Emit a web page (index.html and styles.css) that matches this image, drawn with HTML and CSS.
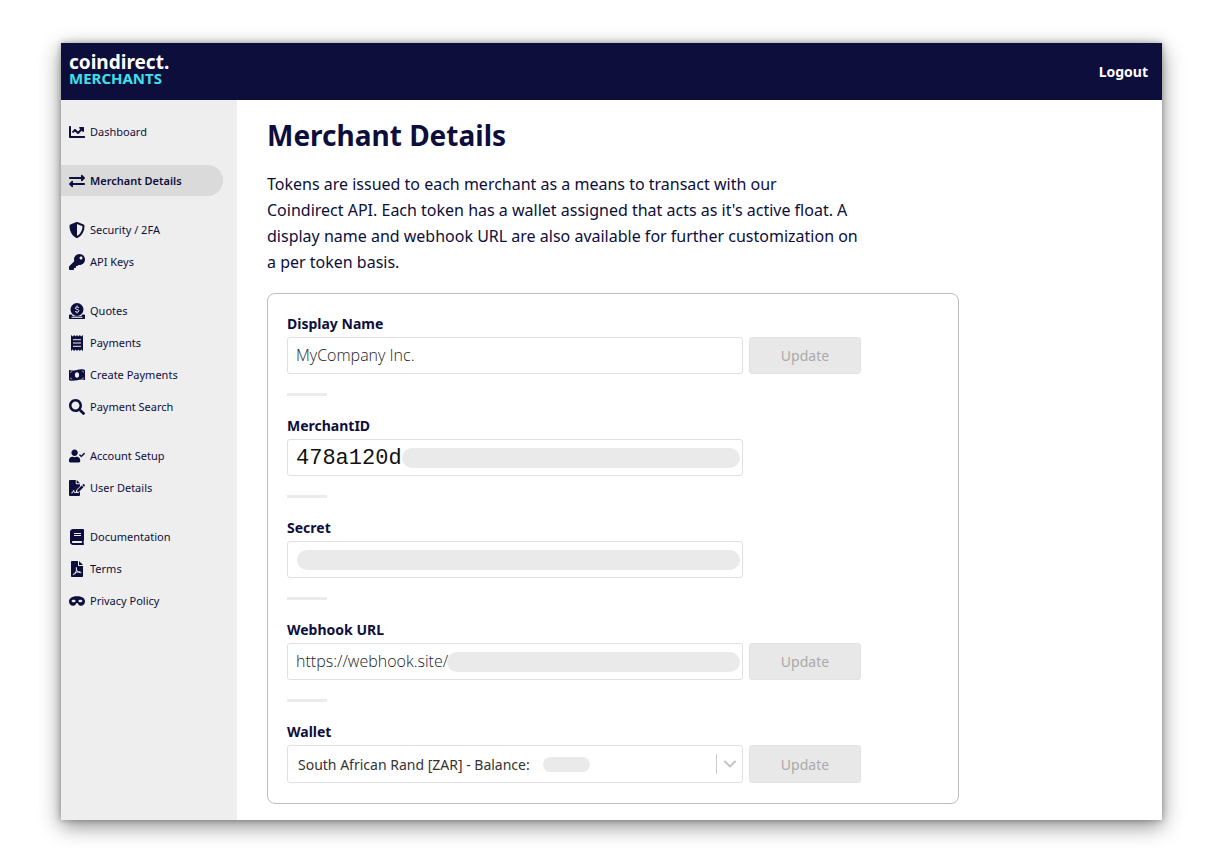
FILE: index.html
```html
<!DOCTYPE html>
<html lang="en">
<head>
<meta charset="utf-8">
<meta name="viewport" content="width=device-width, initial-scale=1">
<title>Merchant Details</title>
<link rel="stylesheet" href="styles.css">
</head>
<body>
<div class="window">
  <header class="topbar">
    <a class="brand" href="#"><span class="brand-name">coindirect.</span><span class="brand-sub">MERCHANTS</span></a>
    <a class="logout" href="#">Logout</a>
  </header>
  <div class="layout">
    <nav class="sidebar" aria-label="Main">
      <div class="nav-group">
        <a class="nav-item" href="#"><svg class="icon" viewBox="0 0 512 512"><path d="M496 384H64V80c0-8.840-7.160-16-16-16H16C7.160 64 0 71.160 0 80v336c0 17.670 14.330 32 32 32h464c8.840 0 16-7.160 16-16v-32c0-8.840-7.160-16-16-16zM464 96H345.940c-21.380 0-32.090 25.850-16.970 40.970l32.400 32.400L288 242.750l-73.370-73.370c-12.500-12.500-32.760-12.500-45.250 0l-68.690 68.690c-6.250 6.250-6.250 16.380 0 22.630l22.620 22.620c6.250 6.250 16.380 6.250 22.630 0L192 237.250l73.370 73.370c12.500 12.500 32.760 12.500 45.250 0l96-96 32.400 32.400c15.120 15.120 40.970 4.410 40.970-16.970V112c.010-8.840-7.150-16-15.990-16z"/></svg>Dashboard</a>
      </div>
      <div class="nav-group">
        <a class="nav-item active" href="#" aria-current="page"><svg class="icon" viewBox="0 0 512 512"><path d="M0 168v-16c0-13.255 10.745-24 24-24h360V80c0-21.367 25.899-32.042 40.971-16.971l80 80c9.372 9.373 9.372 24.569 0 33.941l-80 80C409.956 271.982 384 261.456 384 240v-48H24c-13.255 0-24-10.745-24-24zm488 152H128v-48c0-21.314-25.862-32.080-40.971-16.971l-80 80c-9.372 9.373-9.372 24.569 0 33.941l80 80C102.057 463.997 128 453.437 128 432v-48h360c13.255 0 24-10.745 24-24v-16c0-13.255-10.745-24-24-24z"/></svg>Merchant Details</a>
      </div>
      <div class="nav-group">
        <a class="nav-item" href="#"><svg class="icon" viewBox="0 0 512 512"><path d="M466.500 83.700l-192-80a48.150 48.150 0 0 0-36.900 0l-192 80C27.700 91.100 16 108.600 16 128c0 198.500 114.500 335.700 221.500 380.300 11.800 4.900 25.100 4.900 36.900 0C360.100 472.600 496 349.300 496 128c0-19.400-11.700-36.900-29.500-44.300zM256.100 446.300l-.1-381 175.900 73.300c-3.300 151.400-82.100 261.100-175.800 307.700z"/></svg>Security / 2FA</a>
        <a class="nav-item" href="#"><svg class="icon" viewBox="0 0 512 512"><path d="M512 176C512 273.200 433.200 352 336 352c-11.200 0-22.200-1-32.800-3l-24 27a24 24 0 0 1-18 8H224v40c0 13.300-10.700 24-24 24h-40v40c0 13.300-10.700 24-24 24H24c-13.300 0-24-10.700-24-24v-78c0-6.400 2.500-12.500 7-17l161.800-161.800C163.100 213.800 160 195.300 160 176 160 78.800 238.800 0 336 0c97.500 0 176 78.500 176 176zM336 128c0 26.500 21.500 48 48 48s48-21.500 48-48-21.500-48-48-48-48 21.500-48 48z"/></svg>API Keys</a>
      </div>
      <div class="nav-group">
        <a class="nav-item" href="#"><svg class="icon" viewBox="0 0 16 16"><circle cx="8" cy="6.500" r="6.500"/><path d="M0.800 11.500H2.500L4 13.200H12L13.500 11.500H15.200Q16 11.500 16 12.300V15.200Q16 16 15.200 16H.8Q0 16 0 15.200V12.300Q0 11.500.8 11.500Z"/><path class="cut" d="M2.500 14.300H13.500M10 4.700C9.400 3.900 6.300 3.600 6.300 5.200 6.300 6.800 9.900 6 9.900 7.800 9.900 9.500 6.700 9.300 6 8.300M8 2.600V3.800M8 9.200V10.400"/></svg>Quotes</a>
        <a class="nav-item" href="#"><svg class="icon" viewBox="0 0 16 16"><path d="M2 0 3.800 1.400 5.200 0 6.600 1.400 8 0 9.400 1.400 10.800 0 12.200 1.400 14 0V16L12.200 14.600 10.800 16 9.400 14.600 8 16 6.600 14.600 5.200 16 3.800 14.600 2 16Z"/><path class="cut" d="M4 4.700H12M4 8H12M4 11.300H12"/></svg>Payments</a>
        <a class="nav-item" href="#"><svg class="icon" viewBox="0 0 16 16"><path d="M0 3.600Q0 2.900.7 3.100C5.800 5 9.500.9 15.300 2.700Q16 2.900 16 3.600V12.500Q16 13.200 15.300 13C10.200 11.200 6.500 15.100.7 13.400Q0 13.200 0 12.500Z"/><ellipse class="cut-fill" cx="8" cy="8" rx="2.100" ry="2.800"/><path class="cut thin" d="M1 5.400Q2.600 5.400 2.800 4.200M1 11Q2.700 11.100 2.900 12.600M15 5.100Q13.400 5 13.200 3.500M15 10.900Q13.400 10.900 13.100 12"/></svg>Create Payments</a>
        <a class="nav-item" href="#"><svg class="icon" viewBox="0 0 512 512"><path d="M505 442.700L405.300 343c-4.500-4.500-10.600-7-17-7H372c27.600-35.300 44-79.700 44-128C416 93.100 322.900 0 208 0S0 93.100 0 208s93.100 208 208 208c48.300 0 92.700-16.400 128-44v16.300c0 6.400 2.500 12.500 7 17l99.700 99.700c9.400 9.400 24.600 9.400 33.900 0l28.300-28.300c9.400-9.400 9.400-24.600.1-34zM208 336c-70.700 0-128-57.200-128-128 0-70.700 57.200-128 128-128 70.700 0 128 57.200 128 128 0 70.700-57.200 128-128 128z"/></svg>Payment Search</a>
      </div>
      <div class="nav-group">
        <a class="nav-item" href="#"><svg class="icon" viewBox="0 0 640 512"><path d="M224 256c70.700 0 128-57.300 128-128S294.700 0 224 0 96 57.300 96 128s57.300 128 128 128zm89.600 32h-16.700c-22.200 10.200-46.900 16-72.900 16s-50.600-5.800-72.900-16h-16.700C60.200 288 0 348.200 0 422.400V464c0 26.500 21.500 48 48 48h352c26.500 0 48-21.500 48-48v-41.600c0-74.200-60.200-134.400-134.400-134.400z"/><path d="M636 159 608 130Q602 126 596 130L491 235 445 189Q439 185 433 189L404 217Q400 223 404 229L484 310Q491 314 497 310L636 171Q640 165 636 159Z"/></svg>Account Setup</a>
        <a class="nav-item" href="#"><svg class="icon" viewBox="0 0 16 16"><path d="M0 1Q0 0 1 0H6.800V3.500Q6.800 4.200 7.500 4.200H11V6.300L7 10.200V12.300L5.800 12 5 10.300Q4.500 9.500 4 10.300L3.200 12.400H2V13.200H3.700L4.500 11.300 5.300 13H9.300L11 11.500V15Q11 16 10 16H1Q0 16 0 15ZM7.700 0 11 3.300H7.700Z"/><path d="M12.700 5.500 14.500 7.300 10.100 11.800H8.200V10ZM13.300 4.900 14 4.200Q14.500 3.800 15 4.200L15.800 5Q16.200 5.500 15.800 6L15.100 6.700Z"/></svg>User Details</a>
      </div>
      <div class="nav-group">
        <a class="nav-item" href="#"><svg class="icon" viewBox="-32 0 512 512"><path d="M448 360V24c0-13.300-10.700-24-24-24H96C43 0 0 43 0 96v320c0 53 43 96 96 96h328c13.300 0 24-10.700 24-24v-16c0-7.500-3.500-14.300-8.900-18.700-4.200-15.400-4.200-59.300 0-74.700 5.400-4.300 8.900-11.100 8.900-18.600zM128 134c0-3.300 2.700-6 6-6h212c3.300 0 6 2.700 6 6v20c0 3.300-2.700 6-6 6H134c-3.300 0-6-2.700-6-6v-20zm0 64c0-3.300 2.700-6 6-6h212c3.300 0 6 2.700 6 6v20c0 3.300-2.700 6-6 6H134c-3.300 0-6-2.700-6-6v-20zm253.400 250H96c-17.700 0-32-14.300-32-32 0-17.600 14.400-32 32-32h285.400c-1.900 17.100-1.900 46.900 0 64z"/></svg>Documentation</a>
        <a class="nav-item" href="#"><svg class="icon" viewBox="0 0 16 16"><path d="M2 .8Q2 0 2.800 0H9V4.300Q9 5 9.700 5H14V15.200Q14 16 13.200 16H2.800Q2 16 2 15.200ZM10 0 14 4H10Z"/><path class="cut" d="M7.300 6.500C6.800 9.500 8.500 11 11.500 11.800 12.800 11.300 11 10 7.500 11.300 4.500 12.400 3.800 13.800 4.700 13.700 6 13.500 8.300 9 7.300 6.500Z"/></svg>Terms</a>
        <a class="nav-item" href="#"><svg class="icon" viewBox="0 0 640 512"><path d="M320.700 64c-442.600 0-357.600 384-158.500 384 39.900 0 77.500-20.700 101.400-55.900l25.700-37.800c15.700-23 47-23 62.700 0l25.700 37.800C401.700 427.300 439.200 448 479.100 448c189.900 0 290.700-384-158.400-384zM184 308.400c-41.100 0-67.800-25.700-80.100-41.100-5.200-6.500-5.200-16.100 0-22.600 12.300-15.400 39-41.100 80.100-41.100s67.800 25.700 80.100 41.100c5.200 6.500 5.200 16.100 0 22.600-12.300 15.400-39 41.100-80.100 41.100zm272 0c-41.100 0-67.800-25.700-80.100-41.100-5.200-6.500-5.200-16.100 0-22.600 12.300-15.400 39-41.100 80.100-41.100s67.800 25.700 80.100 41.100c5.200 6.500 5.200 16.100 0 22.600-12.300 15.400-39 41.100-80.100 41.100z"/></svg>Privacy Policy</a>
      </div>
    </nav>
    <main class="content">
      <h1 class="title">Merchant Details</h1>
      <p class="intro">Tokens are issued to each merchant as a means to transact with our<br>Coindirect API. Each token has a wallet assigned that acts as it's active float. A<br>display name and webhook URL are also available for further customization on<br>a per token basis.</p>
      <form class="card">
        <div class="field">
          <label class="label" for="display-name">Display Name</label>
          <div class="row">
            <div class="control"><input class="input" id="display-name" type="text" value="MyCompany Inc."></div>
            <button class="update" type="button" disabled>Update</button>
          </div>
        </div>
        <hr class="divider">
        <div class="field">
          <label class="label" for="merchant-id">MerchantID</label>
          <div class="row">
            <div class="control"><input class="input mono" id="merchant-id" type="text" value="478a120d" readonly><span class="mask mask-id"></span></div>
          </div>
        </div>
        <hr class="divider">
        <div class="field">
          <label class="label" for="secret">Secret</label>
          <div class="row">
            <div class="control"><input class="input mono" id="secret" type="text" readonly><span class="mask mask-secret"></span></div>
          </div>
        </div>
        <hr class="divider">
        <div class="field">
          <label class="label" for="webhook">Webhook URL</label>
          <div class="row">
            <div class="control"><input class="input" id="webhook" type="text" value="https://webhook.site/"><span class="mask mask-url"></span></div>
            <button class="update" type="button" disabled>Update</button>
          </div>
        </div>
        <hr class="divider">
        <div class="field">
          <label class="label" for="wallet">Wallet</label>
          <div class="row">
            <div class="control">
              <select class="input select" id="wallet"><option>South African Rand [ZAR] - Balance:</option></select>
              <span class="mask mask-balance"></span>
              <span class="caret"><svg class="chevron" viewBox="0 0 12 8"><path d="M1 1.500 6 6.500 11 1.500"/></svg></span>
            </div>
            <button class="update" type="button" disabled>Update</button>
          </div>
        </div>
      </form>
    </main>
  </div>
</div>
</body>
</html>
```
FILE: styles.css
```css
* {
  box-sizing: border-box;
}

body {
  margin: 0;
  min-height: 100vh;
  padding: 43px 61px;
  display: flex;
  background: #fff;
  color: #0d0e3c;
  font-family: "Noto Sans", "Open Sans", sans-serif;
}

a {
  color: inherit;
  text-decoration: none;
}

.window {
  flex: 1;
  display: flex;
  flex-direction: column;
  background: #fff;
  box-shadow: 0 0 6px rgba(0, 0, 0, 0.3), 0 6px 20px rgba(0, 0, 0, 0.45);
}

.topbar {
  height: 57px;
  padding: 0 14px 0 8px;
  display: flex;
  align-items: center;
  justify-content: space-between;
  background: #0d0e3c;
  color: #fff;
}

.brand {
  display: flex;
  flex-direction: column;
  padding-bottom: 4px;
  font-weight: 700;
}

.brand-name {
  font-size: 19px;
  line-height: 18px;
}

.brand-sub {
  font-size: 15px;
  line-height: 15px;
  color: #3fe0ea;
}

.logout {
  font-size: 14px;
  font-weight: 700;
}

.layout {
  flex: 1;
  display: flex;
}

.sidebar {
  flex: none;
  width: 176px;
  padding: 16px 14px 16px 0;
  display: flex;
  flex-direction: column;
  gap: 18px;
  background: #eee;
}

.nav-group {
  display: flex;
  flex-direction: column;
  gap: 1px;
}

.nav-item {
  height: 31px;
  padding-left: 8px;
  display: flex;
  align-items: center;
  gap: 5px;
  border-radius: 0 16px 16px 0;
  font-size: 11px;
}

.nav-item.active {
  background: #dadada;
  font-weight: 600;
}

.icon {
  flex: none;
  width: 16px;
  height: 16px;
  fill: #0d0e3c;
}

.icon .cut {
  fill: none;
  stroke: #eee;
  stroke-width: 1;
}

.icon .thin {
  stroke-width: 0.6;
}

.icon .cut-fill {
  fill: #eee;
}

.content {
  flex: 1;
  min-width: 0;
  padding: 17px 30px 16px;
}

.title {
  margin: 0 0 18px;
  font-size: 28px;
  line-height: 36px;
  font-weight: 700;
}

.intro {
  max-width: 692px;
  margin: 0 0 18px;
  font-size: 16px;
  line-height: 26px;
}

.card {
  max-width: 692px;
  padding: 20px 19px;
  border: 1px solid #bdbdbd;
  border-radius: 8px;
}

.label {
  display: block;
  margin-bottom: 3px;
  font-size: 14px;
  line-height: 20px;
  font-weight: 700;
}

.row {
  display: flex;
  gap: 6px;
}

.control {
  position: relative;
  flex: 0 1 456px;
  min-width: 0;
}

.input {
  display: block;
  width: 100%;
  height: 37px;
  padding: 0 8px 2px;
  border: 1px solid #e0e0e0;
  border-radius: 3px;
  background: #fff;
  color: #222;
  font-family: "Open Sans", "Noto Sans", sans-serif;
  font-size: 16px;
  font-weight: 300;
}

.mono {
  padding: 2px 8px 0;
  color: #111;
  font-family: "Liberation Mono", monospace;
  font-size: 22px;
  font-weight: 400;
}

.select {
  height: 38px;
  padding: 0 10px;
  appearance: none;
  color: #333;
  font-family: "Noto Sans", sans-serif;
  font-size: 14px;
  font-weight: 400;
}

.update {
  flex: none;
  width: 112px;
  border: 1px solid #e2e2e2;
  border-radius: 3px;
  background: #e8e8e8;
  color: #aaa;
  font-family: inherit;
  font-size: 14px;
}

.divider {
  width: 40px;
  height: 3px;
  margin: 19px 0 20px;
  border: 0;
  background: #ebebeb;
}

/* Rounded covers that hide private values */
.mask {
  position: absolute;
  top: 9px;
  right: 3px;
  height: 20px;
  border-radius: 10px;
  background: #eaeaea;
}

.mask-id {
  left: 115px;
}

.mask-secret {
  left: 10px;
}

.mask-url {
  left: 160px;
}

.mask-balance {
  top: 12px;
  right: auto;
  left: 256px;
  width: 47px;
  height: 15px;
}

.caret {
  position: absolute;
  top: 9px;
  right: 0;
  width: 27px;
  height: 20px;
  display: flex;
  align-items: center;
  justify-content: center;
  border-left: 1px solid #ccc;
  pointer-events: none;
}

.chevron {
  width: 12px;
  height: 8px;
  fill: none;
  stroke: #c4c4c4;
  stroke-width: 2;
  stroke-linecap: round;
  stroke-linejoin: round;
}
```
